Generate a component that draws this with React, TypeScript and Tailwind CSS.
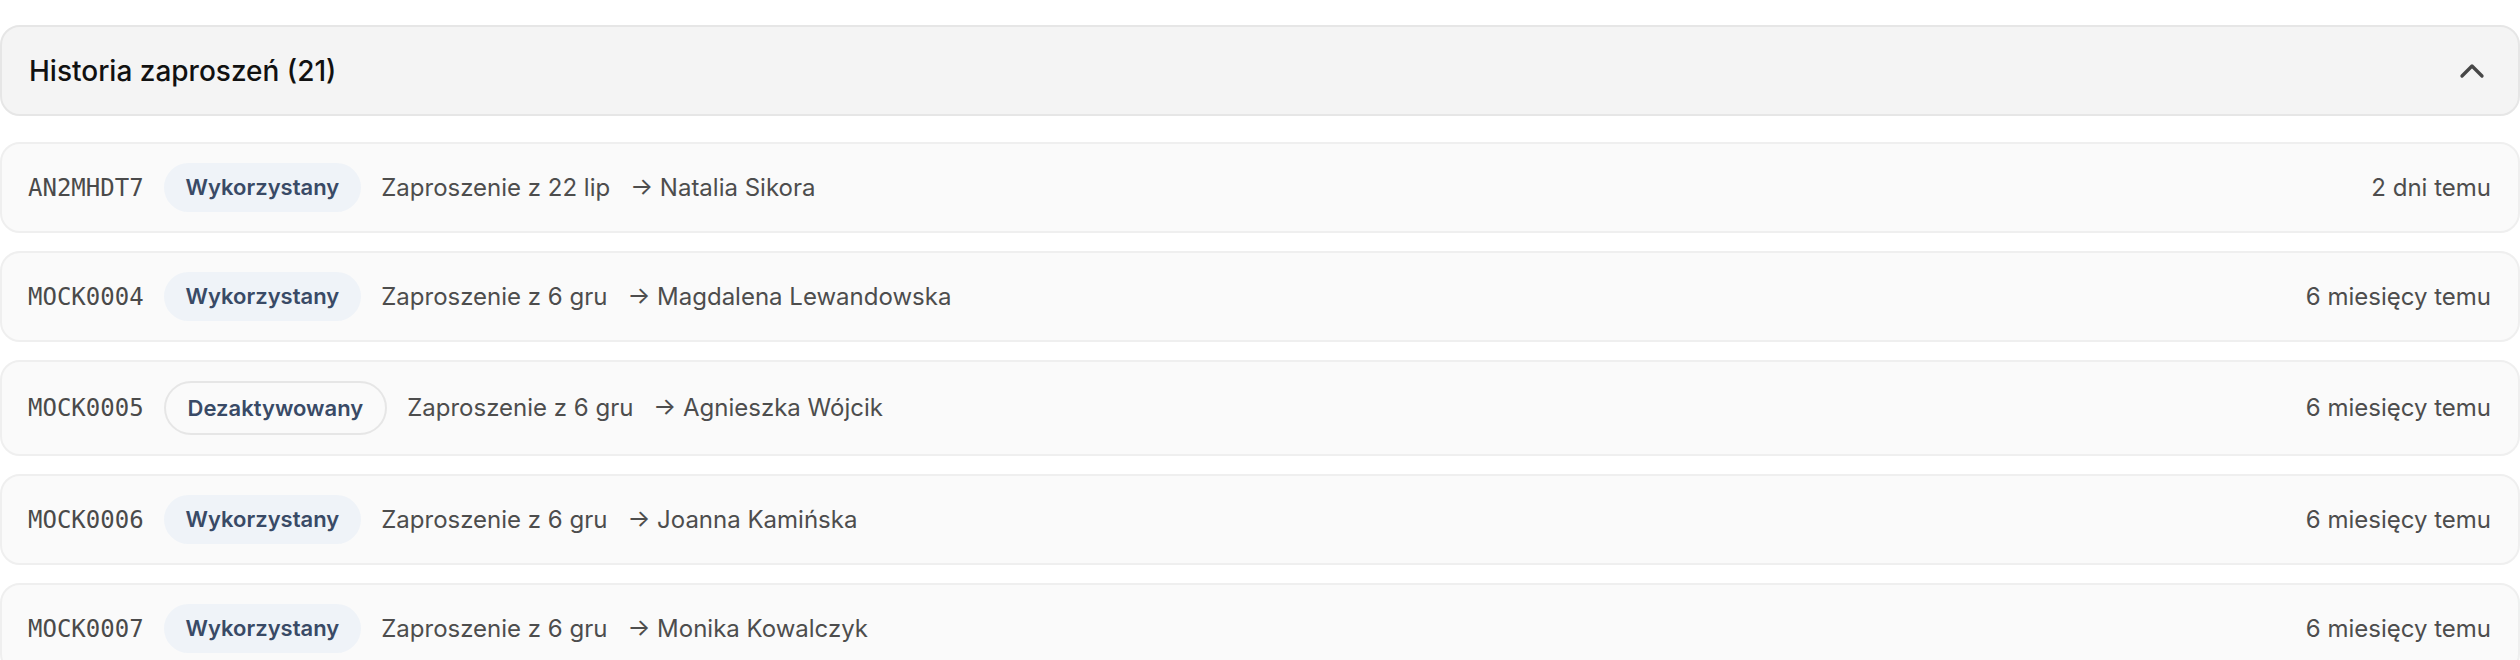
import { ChevronUp } from 'lucide-react';

type Invite = {
  code: string;
  status: 'used' | 'deactivated';
  date: string;
  invitee: string;
  ago: string;
};

const invites: Invite[] = [
  { code: 'AN2MHDT7', status: 'used', date: '22 lip', invitee: 'Natalia Sikora', ago: '2 dni temu' },
  { code: 'MOCK0004', status: 'used', date: '6 gru', invitee: 'Magdalena Lewandowska', ago: '6 miesięcy temu' },
  { code: 'MOCK0005', status: 'deactivated', date: '6 gru', invitee: 'Agnieszka Wójcik', ago: '6 miesięcy temu' },
  { code: 'MOCK0006', status: 'used', date: '6 gru', invitee: 'Joanna Kamińska', ago: '6 miesięcy temu' },
  { code: 'MOCK0007', status: 'used', date: '6 gru', invitee: 'Monika Kowalczyk', ago: '6 miesięcy temu' },
];

function StatusBadge({ status }: { status: Invite['status'] }) {
  if (status === 'deactivated') {
    return (
      <span className="inline-flex h-[54px] items-center rounded-full border-2 border-[#e6e6e6] px-[22px] text-[22px] font-semibold text-[#394a66]">
        Dezaktywowany
      </span>
    );
  }
  return (
    <span className="inline-flex h-[49px] items-center rounded-full bg-[#eff3f8] px-[22px] text-[22px] font-semibold text-[#394a66]">
      Wykorzystany
    </span>
  );
}

function InviteRow({ invite }: { invite: Invite }) {
  return (
    <div className="flex items-center justify-between rounded-[20px] border-2 border-[#efefef] bg-[#fafafa] py-[19px] pl-[26px] pr-[27px]">
      <div className="flex items-center gap-[20px]">
        <span className="font-['DejaVu_Sans_Mono',monospace] text-[24px] text-[#4a4a4a]">
          {invite.code}
        </span>
        <StatusBadge status={invite.status} />
        <span className="text-[24px] text-[#4d4d4d]">Zaproszenie z {invite.date}</span>
        <span className="text-[24px] text-[#4d4d4d]">→ {invite.invitee}</span>
      </div>
      <span className="text-[24px] text-[#4d4d4d]">{invite.ago}</span>
    </div>
  );
}

export default function App() {
  return (
    <div className="min-h-screen bg-white pt-[25px] font-['Inter',sans-serif]">
      <div className="flex flex-col gap-[26px]">
        {/* Collapsible header */}
        <button className="flex h-[91px] w-full items-center justify-between rounded-[20px] border-2 border-[#e6e6e6] bg-[#f4f4f4] pl-[27px] pr-[26px] text-left">
          <span className="text-[28px] font-medium text-[#111111]">Historia zaproszeń (21)</span>
          <ChevronUp size={40} strokeWidth={2} className="text-[#474747]" />
        </button>

        <div className="flex flex-col gap-[18px]">
          {invites.map((invite) => (
            <InviteRow key={invite.code} invite={invite} />
          ))}
        </div>
      </div>
    </div>
  );
}
